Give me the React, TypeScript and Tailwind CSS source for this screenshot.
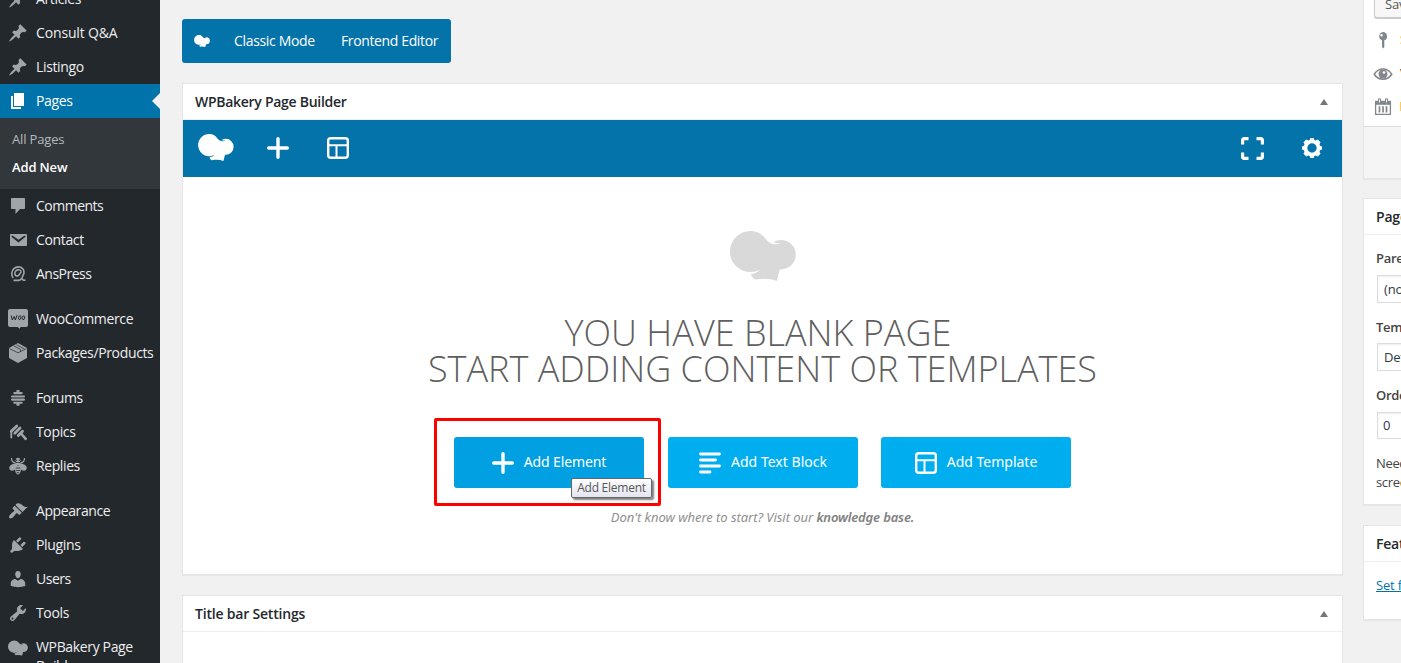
import type { ReactNode } from 'react';

const post =
  'M10.44 3.02l1.82-1.82 6.36 6.35-1.83 1.82c-1.05-.68-2.48-.57-3.41.36l-.75.75c-.92.93-1.04 2.35-.35 3.41l-1.83 1.82-2.41-2.41-2.8 2.79c-.42.42-3.38 2.71-3.8 2.29s1.86-3.39 2.28-3.81l2.79-2.79L4.1 9.36l1.83-1.82c1.05.69 2.48.57 3.4-.36l.75-.75c.93-.92 1.05-2.35.36-3.41z';

function Hat({ className }: { className: string }) {
  return (
    <svg viewBox="0 0 66 50" className={className} fill="currentColor">
      <path d="M20.5 0C27 0 31.500 2.700 35 7.200C38.500 11.500 41 13.200 45.500 13.200L51 12.700C48.500 12 46 11.600 43.200 11.400C45.500 9.800 48.200 9 51 9A14.700 14.700 0 0 1 51 38.400L49.700 38.400L46.800 50C40.500 47.500 33 47.200 25.500 48.600C23.500 47.700 21.500 46 21 43.300C24.800 42.500 28 41 31 38.300C28 40 24.500 41.100 20.500 41.100A20.500 20.500 0 0 1 20.500 0Z" />
    </svg>
  );
}

function Dash({ d }: { d: string }) {
  return (
    <svg viewBox="0 0 20 20" className="size-5" fill="currentColor">
      <path d={d} fillRule="evenodd" />
    </svg>
  );
}

const icons: Record<string, ReactNode> = {
  post: <Dash d={post} />,
  page: <Dash d="M6 15V2h10v13H6zm-1 1h8v2H3V5h2v11z" />,
  comments: <Dash d="M4 2h12c.6 0 1 .4 1 1v9c0 .6-.4 1-1 1h-4l-4.500 5v-5H4c-.6 0-1-.4-1-1V3c0-.6.4-1 1-1z" />,
  email: (
    <Dash d="M3 4h15c.5 0 1 .4 1 1v10c0 .6-.5 1-1 1H3c-.600 0-1-.400-1-1V5c0-.600.400-1 1-1zm7.490 8.600l6.740-5.530c.240-.200.430-.660.130-1.070-.290-.410-.820-.420-1.170-.170l-5.700 3.860L4.800 5.830c-.350-.250-.880-.240-1.170.170-.300.410-.110.870.130 1.070z" />
  ),
  ans: (
    <svg viewBox="0 0 20 20" className="size-5" fill="none" stroke="currentColor" strokeWidth="1.600">
      <path d="M5.200 14A6.200 6.200 0 0 1 3.800 9.500C4 5.500 7 2.900 10.500 2.900C14 2.900 16.300 5.500 16 8.700C15.800 11 13.600 12.600 14 14.600C14.200 15.900 15.500 16.400 17.500 16.300" />
      <path d="M13.300 7.800C12.800 6.200 11.300 5.600 9.800 5.900C7.700 6.400 6.500 8.400 6.900 10.300C7.300 12 9.300 12.500 10.700 11.300C11.800 10.400 12.300 8.800 13.300 7.800" />
      <path d="M5.500 16.400H10.500C12 16.300 13 15.500 13.600 14.300" />
    </svg>
  ),
  woo: (
    <svg viewBox="0 0 20 20" className="size-5" fill="currentColor">
      <path d="M2 0h16a2 2 0 0 1 2 2v14a2 2 0 0 1-2 2h-5.500l-.7 1.800L9.500 18H2a2 2 0 0 1-2-2V2a2 2 0 0 1 2-2z" />
      <path d="M3.200 6.500L4.300 11L6.200 7.500L7.400 11L9 6.200" fill="none" stroke="#23282d" strokeWidth="1" />
      <ellipse cx="11.700" cy="8.700" rx="1.200" ry="2" fill="none" stroke="#23282d" strokeWidth=".9" transform="rotate(15 11.700 8.700)" />
      <ellipse cx="15.500" cy="8.700" rx="1.200" ry="2" fill="none" stroke="#23282d" strokeWidth=".9" transform="rotate(15 15.500 8.700)" />
    </svg>
  ),
  box: (
    <svg viewBox="0 0 20 20" className="size-5">
      <path d="M10 0L19 5V15L10 20L1 15V5Z" fill="currentColor" />
      <path d="M1.500 5.600L10 9.800L18.500 5.600M6 3L12.500 6.500V8.500M8.300 1.700L16.500 6" fill="none" stroke="#23282d" strokeWidth=".7" />
    </svg>
  ),
  forums: (
    <svg viewBox="0 0 20 20" className="size-5" stroke="currentColor" strokeWidth="2.100" strokeLinecap="round">
      <path d="M9.300 3H10.700M6.300 5.100H13.700M4 8.500H16M4 11.600H16M6.300 14.700H13.700M9.300 16.800H10.700" />
    </svg>
  ),
  topics: (
    <svg viewBox="0 0 20 20" className="size-5" stroke="currentColor" strokeLinecap="round" fill="none">
      <path d="M3.300 9.300L8.800 4M6.800 11.200L12 6M10.300 13.500L14.500 9.200" strokeWidth="2.800" />
      <path d="M13 11.500L17.700 16.800" strokeWidth="2.600" />
      <path d="M3.300 10V15.500" strokeWidth="1.800" />
    </svg>
  ),
  replies: (
    <svg viewBox="0 0 20 20" className="size-5" fill="currentColor">
      <circle cx="10" cy="4.200" r="2.400" />
      <path d="M10 7C7 6.800 2 8.500 1.300 11.300C.8 14.500 4.200 16 7 13.500L10 9L13 13.500C15.800 16 19.200 14.500 18.700 11.300C18 8.500 13 6.800 10 7Z" />
      <path d="M7.300 10H12.700L13 13.500C13 16 11.500 18.500 10 18.500S7 16 7 13.500Z" />
      <path d="M3.500 2C3.300 5.300 5 6.500 7.500 6.500M16.500 2C16.700 5.300 15 6.500 12.500 6.500" fill="none" stroke="currentColor" strokeWidth="1.200" />
      <path d="M7.800 12H12.200M7.800 14.500H12.200M8.700 16.700H11.300" stroke="#23282d" strokeWidth=".8" />
      <path d="M8.700 3.500V4.800M11.300 3.500V4.800" stroke="#23282d" strokeWidth="1" />
    </svg>
  ),
  appearance: (
    <Dash d="M14.480 11.060L7.410 3.990l1.500-1.500c.5-.56 2.300-.47 3.510.32 1.210.8 1.430 1.280 2.910 2.100 1.180.64 2.450 1.260 4.450.85zm-.71.71L6.700 4.700 4.930 6.470c-.39.39-.39 1.020 0 1.410l1.060 1.060c.39.39.39 1.030 0 1.420-.6.6-1.430 1.110-2.210 1.690-.35.26-.7.53-1.010.84C1.430 14.230.4 16.080 1.400 17.070c.99 1 2.840-.03 4.180-1.360.31-.31.58-.66.85-1.020.57-.78 1.080-1.610 1.690-2.210.39-.39 1.020-.39 1.410 0l1.060 1.060c.39.39 1.020.39 1.410 0z" />
  ),
  plugins: (
    <Dash d="M13.110 4.360L9.870 7.600 8 5.730l3.240-3.240c.35-.34 1.050-.2 1.560.32.52.51.66 1.210.31 1.550zm-8 1.770l.91-1.120 9.010 9.010-1.190.84c-.71.71-2.630 1.160-3.820 1.160H6.140L4.900 17.260c-.59.59-1.540.59-2.120 0-.59-.58-.59-1.530 0-2.120l1.240-1.240v-3.880c0-1.130.4-3.190 1.090-3.890zm7.260 3.970l3.240-3.240c.34-.35 1.040-.21 1.550.31.52.51.66 1.210.31 1.550l-3.240 3.250z" />
  ),
  users: (
    <Dash d="M10 9.250c-2.270 0-2.730-3.440-2.730-3.440C7 4.020 7.820 2 9.970 2c2.160 0 2.980 2.020 2.710 3.810 0 0-.41 3.440-2.680 3.440zm0 2.570L12.720 10c2.390 0 4.520 2.330 4.520 4.530v2.490s-3.650 1.130-7.240 1.130c-3.650 0-7.240-1.130-7.240-1.130v-2.490c0-2.250 1.940-4.480 4.470-4.480z" />
  ),
  tools: (
    <Dash d="M16.680 9.770c-1.340 1.340-3.300 1.670-4.950.99l-5.410 6.520c-.99.99-2.590.99-3.580 0s-.99-2.590 0-3.570l6.520-5.420c-.68-1.650-.35-3.610.99-4.950 1.280-1.280 3.120-1.620 4.720-1.060l-2.890 2.890 2.820 2.820 2.860-2.870c.53 1.580.18 3.390-1.080 4.650zM3.810 16.210c.4.39 1.040.39 1.430 0 .4-.4.4-1.040 0-1.430-.39-.4-1.030-.4-1.430 0-.39.39-.39 1.030 0 1.430z" />
  ),
  hat: <Hat className="mt-0.5 h-4 w-5" />,
};

function Item({ icon, children, active, gap }: { icon: string; children: ReactNode; active?: boolean; gap?: boolean }) {
  return (
    <div
      className={
        'flex h-[34px] shrink-0 items-center pl-2 whitespace-nowrap ' +
        (active ? 'bg-[#0073aa] text-white ' : 'text-[#eee] ') +
        (gap ? 'mt-[11px]' : '')
      }
    >
      <span className={'flex size-5 shrink-0 items-center ' + (active ? 'text-white' : 'text-[#a0a5aa]')}>{icons[icon]}</span>
      <span className="ml-2 text-[14px] leading-[18px] tracking-[-0.35px]">{children}</span>
      {active && (
        <svg viewBox="0 0 8 16" className="ml-auto h-4 w-2">
          <path d="M8 0V16L0 8Z" fill="#f1f1f1" />
        </svg>
      )}
    </div>
  );
}

function Sidebar() {
  return (
    <nav className="h-full w-40 shrink-0 overflow-hidden bg-[#23282d]">
      <div className="-mt-[18px] flex flex-col">
        <Item icon="post">Articles</Item>
        <Item icon="post"><span className="tracking-[-0.15px]">Consult Q&amp;A</span></Item>
        <Item icon="post">Listingo</Item>
        <Item icon="page" active>Pages</Item>
        <div className="flex h-[71px] flex-col bg-[#32373c] pt-[7px] pl-3 text-[13px] leading-7">
          <span className="tracking-[-0.15px] text-[#b4b9be]">All Pages</span>
          <span className="font-semibold tracking-[-0.15px] text-white">Add New</span>
        </div>
        <Item icon="comments"><span className="tracking-[-0.5px]">Comments</span></Item>
        <Item icon="email">Contact</Item>
        <Item icon="ans"><span className="tracking-[-0.5px]">AnsPress</span></Item>
        <Item icon="woo" gap>WooCommerce</Item>
        <Item icon="box">Packages/Products</Item>
        <Item icon="forums" gap><span className="tracking-[-0.5px]">Forums</span></Item>
        <Item icon="topics">Topics</Item>
        <Item icon="replies"><span className="tracking-[-0.4px]">Replies</span></Item>
        <Item icon="appearance" gap><span className="tracking-[-0.4px]">Appearance</span></Item>
        <Item icon="plugins">Plugins</Item>
        <Item icon="users"><span className="tracking-[-0.5px]">Users</span></Item>
        <Item icon="tools">Tools</Item>
        <Item icon="hat">WPBakery Page</Item>
        <span className="-mt-[7px] ml-9 text-[14px] leading-[18px] tracking-[-0.35px] text-[#eee]">Builder</span>
      </div>
    </nav>
  );
}

function Plus({ className }: { className: string }) {
  return (
    <svg viewBox="0 0 22 22" className={className} stroke="currentColor" strokeWidth="3.400" strokeLinecap="round">
      <path d="M11 1.700V20.300M1.700 11H20.300" />
    </svg>
  );
}

function Template({ className }: { className: string }) {
  return (
    <svg viewBox="0 0 22 22" className={className} stroke="currentColor" strokeWidth="2" fill="none">
      <rect x="1.200" y="1.200" width="19.600" height="19.600" rx="2.500" strokeWidth="2.400" />
      <path d="M1 8.300H21M9.500 8.300V21" />
    </svg>
  );
}

function PanelHead({ children }: { children: ReactNode }) {
  return (
    <div className="flex h-9 items-center justify-between border-b border-[#eee] pr-[14px] pl-3 text-[14px] font-[550] text-[#23282d]">
      <span>{children}</span>
      <svg viewBox="0 0 8 6" className="h-1.5 w-2">
        <path d="M4 0L8 6H0Z" fill="#72777c" />
      </svg>
    </div>
  );
}

function BigButton({ icon, children, hover }: { icon: ReactNode; children: ReactNode; hover?: boolean }) {
  return (
    <div
      className={
        'flex h-[51px] w-[190px] items-center justify-center gap-2.5 rounded-[3px] text-[14px] whitespace-nowrap text-white ' +
        (hover ? 'bg-[#00a0e2]' : 'bg-[#00aeef]')
      }
    >
      {icon}
      <span className="pb-[3px]">{children}</span>
    </div>
  );
}

function Main() {
  return (
    <main className="ml-[22px] flex w-[1161px] shrink-0 flex-col pt-[19px]">
      <div className="flex h-11 w-[269px] shrink-0 items-center rounded-[3px] bg-[#0473aa] pl-3 text-[14px] text-white">
        <Hat className="h-3 w-4" />
        <span className="ml-6 w-[107px] pb-[2px] tracking-[-0.33px] whitespace-nowrap">Classic Mode</span>
        <span className="pb-[2px] tracking-[-0.37px] whitespace-nowrap">Frontend Editor</span>
      </div>

      <section className="mt-5 h-[492px] shrink-0 border border-[#e5e5e5] bg-white shadow-[0_1px_1px_rgba(0,0,0,0.04)]">
        <PanelHead>
          <span className="tracking-[-0.28px]">WPBakery Page Builder</span>
        </PanelHead>
        <div className="flex h-[57px] items-center bg-[#0473aa] pb-px text-white">
          <Hat className="-mt-[2px] ml-[15px] h-[27px] w-9" />
          <Plus className="ml-[33px] size-[22px]" />
          <Template className="ml-[38px] size-[22px]" />
          <svg viewBox="0 0 23 23" className="ml-auto size-[23px]" fill="none" stroke="currentColor" strokeWidth="3.200">
            <path d="M1.600 7.500V3A1.400 1.400 0 0 1 3 1.600H7.500M15.500 1.600H20A1.400 1.400 0 0 1 21.400 3V7.500M21.400 15.500V20A1.400 1.400 0 0 1 20 21.400H15.500M7.500 21.400H3A1.400 1.400 0 0 1 1.600 20V15.500" />
          </svg>
          <svg viewBox="0 0 20 20" className="mr-5 ml-[38px] size-5" fill="currentColor">
            <path
              fillRule="evenodd"
              d="M8.400 0h3.200l.6 1.800 1.500.6L15.800 1.500l2.700 2.700-1 2 .6 1.500L20 8.400v3.200l-1.900.7-.6 1.500 1 2-2.700 2.700-2.100-1-1.500.7-.6 1.800H8.400l-.6-1.800-1.500-.7-2.100 1-2.700-2.700 1-2-.6-1.500L0 11.600V8.400l1.900-.7.6-1.500-1-2L4.200 1.500l2.100.9 1.500-.6zM10 5.300a4.700 4.700 0 1 0 0 9.400 4.700 4.700 0 0 0 0-9.400z"
            />
          </svg>
        </div>

        <div className="relative flex flex-col items-center pt-[54px]">
          <Hat className="h-[50px] w-[66px] text-[#d9d9d9]" />
          <h1 className="mt-[34px] text-center font-['Open_Sans'] text-[36px] leading-9 font-light whitespace-nowrap text-[#5f5f5f]">
            <span className="pr-[9px]">YOU HAVE BLANK PAGE</span>
            <br />
            START ADDING CONTENT OR TEMPLATES
          </h1>
          <div className="mt-[50px] flex font-['Noto_Sans']">
            <BigButton hover icon={<Plus className="size-[22px]" />}>
              <span className="tracking-[-0.12px]">Add Element</span>
            </BigButton>
            <div className="w-6" />
            <BigButton
              icon={
                <svg viewBox="0 0 22 22" className="size-[22px]" stroke="currentColor" strokeWidth="2.800" strokeLinecap="round">
                  <path d="M1.500 2H20.500M1.500 8H16.500M1.500 14H20.500M1.500 20H11" />
                </svg>
              }
            >
              <span className="tracking-[0.02px]">Add Text Block</span>
            </BigButton>
            <div className="w-[23px]" />
            <BigButton icon={<Template className="size-[22px]" />}>
              <span className="tracking-[0px]">Add Template</span>
            </BigButton>
          </div>
          <p className="mt-5 font-['Noto_Sans'] text-[13px] leading-[18px] whitespace-nowrap text-[#8f8f8f] italic">
            <span className="tracking-[-0.05px]">Don't know where to start? Visit our </span>
            <b className="font-semibold tracking-[-0.15px] text-[#808080]">knowledge base.</b>
          </p>
          <div className="absolute top-[241px] left-[251px] h-[88px] w-[227px] rounded-[2px] border-[3px] border-[#f00]" />
          <div className="absolute top-[301px] left-[388px] flex h-5 w-[81px] items-center justify-center rounded-[2px] border border-[#666] bg-gradient-to-b from-white to-[#e4e5f0] text-[12px] whitespace-nowrap text-[#575757] shadow-[2px_2px_2px_rgba(0,0,0,0.5)]">
            <span className="tracking-[-0.25px]">Add Element</span>
          </div>
        </div>
      </section>

      <section className="mt-5 h-[100px] shrink-0 border border-[#e5e5e5] bg-white">
        <PanelHead>
          <span className="tracking-[-0.2px]">Title bar Settings</span>
        </PanelHead>
      </section>
    </main>
  );
}

function Side() {
  return (
    <aside className="ml-5 flex w-[280px] shrink-0 flex-col text-[13px] tracking-[-0.2px] text-[#444]">
      <section className="flex h-[179px] shrink-0 flex-col border border-t-0 border-[#e5e5e5] bg-white shadow-[0_1px_1px_rgba(0,0,0,0.04)]">
        <div className="-mt-[9px] ml-2.5 h-[27px] w-24 shrink-0 rounded-[3px] border border-[#ccc] bg-[#f7f7f7] pl-2.5 leading-[25px] text-[#555] shadow-[0_1px_0_#ccc]">
          Save Draft
        </div>
        <div className="mt-[5px] flex h-[34px] items-center pl-[9px]">
          <svg viewBox="0 0 20 20" className="size-5" fill="#82878c">
            <path fillRule="evenodd" d="M10 2a4.300 4.300 0 0 1 1.300 8.300V17l-1 1.500L9 17v-6.700A4.300 4.300 0 0 1 10 2zm-1.500 2a1.300 1.300 0 1 0 0 2.600 1.300 1.300 0 0 0 0-2.600z" />
          </svg>
          <span className="ml-[7px] text-[#d98500]">Status: Draft</span>
        </div>
        <div className="flex h-[34px] items-center pl-[9px]">
          <svg viewBox="0 0 20 20" className="size-5" fill="none" stroke="#82878c">
            <path d="M1.200 10.300C5.500 3.200 14.500 3.200 18.800 10.300C14.500 16.800 5.500 16.800 1.200 10.300Z" strokeWidth="1.600" />
            <circle cx="10" cy="10" r="4.500" fill="#82878c" stroke="none" />
            <circle cx="11" cy="8.500" r="1.300" fill="#fff" stroke="none" />
          </svg>
          <span className="ml-[7px]">Visibility: Public</span>
        </div>
        <div className="flex h-8 items-center pl-[9px]">
          <svg viewBox="0 0 20 20" className="size-5" fill="none" stroke="#82878c">
            <path d="M2.600 4.500V17.400H17.400V4.500" strokeWidth="1.300" />
            <path d="M2 5.800H18" strokeWidth="4" />
            <path d="M6.500 1.500V6M13.500 1.500V6" strokeWidth="3" />
            <path d="M6.500 2.500V5.500M13.500 2.500V5.500" stroke="#fff" strokeWidth="1" />
            <path d="M6.500 9.300V15.500M10 9.300V15.500M13.500 9.300V15.500" strokeWidth="1.700" />
          </svg>
          <span className="ml-[6px] text-[#ffb950]">Publish immediately</span>
        </div>
        <div className="mt-auto h-[52px] border-t border-[#ddd] bg-[#f5f5f5]" />
      </section>

      <section className="mt-[19px] h-[307px] shrink-0 border border-[#e5e5e5] bg-white shadow-[0_1px_1px_rgba(0,0,0,0.04)]">
        <PanelHead>Page Attributes</PanelHead>
        <div className="flex flex-col pl-3">
          <span className="mt-[13px] h-5 leading-5 font-[550] tracking-[-0.3px]">Parent</span>
          <div className="mt-[7px] ml-px h-7 w-60 border border-[#ddd] pl-1.5 leading-[26px] text-[#32373c] shadow-[inset_0_1px_2px_rgba(0,0,0,0.07)]">(no parent)</div>
          <span className="mt-3.5 h-5 leading-5 font-[550] tracking-[-0.3px]">Template</span>
          <div className="mt-[6px] ml-px h-7 w-60 border border-[#ddd] pl-1.5 leading-[26px] text-[#32373c] shadow-[inset_0_1px_2px_rgba(0,0,0,0.07)]">Default Template</div>
          <span className="mt-3.5 h-5 leading-5 font-[550] tracking-[-0.3px]">Order</span>
          <div className="mt-[7px] ml-px h-[27px] w-16 border border-[#ddd] pl-[5px] leading-[25px] text-[#32373c] shadow-[inset_0_1px_2px_rgba(0,0,0,0.07)]">0</div>
          <p className="mt-[15px] leading-[19px] tracking-[-0.35px] whitespace-nowrap">
            Need help? Use the Help tab above the
            <br />
            screen title.
          </p>
        </div>
      </section>

      <section className="mt-5 h-[95px] shrink-0 border border-[#e5e5e5] bg-white shadow-[0_1px_1px_rgba(0,0,0,0.04)]">
        <PanelHead>Featured Image</PanelHead>
        <div className="mt-[13px] pl-3 leading-5 text-[#0073aa] underline">Set featured image</div>
      </section>
    </aside>
  );
}

export default function App() {
  return (
    <div className="flex h-[663px] w-[1401px] overflow-hidden bg-[#f1f1f1] font-['Open_Sans','Noto_Sans',sans-serif]">
      <Sidebar />
      <Main />
      <Side />
    </div>
  );
}
